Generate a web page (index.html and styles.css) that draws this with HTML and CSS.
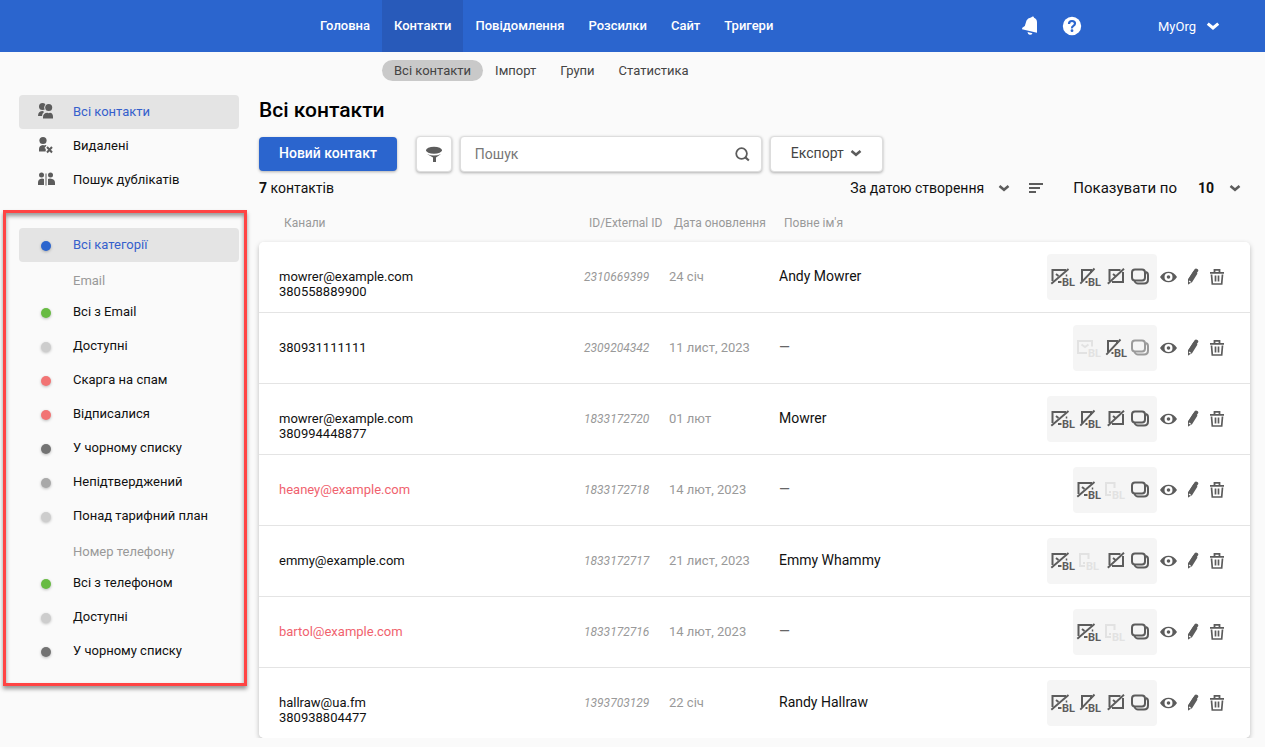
FILE: index.html
```html
<!DOCTYPE html>
<html lang="uk">
<head>
    <meta charset="UTF-8">
    <meta name="viewport" content="width=device-width, initial-scale=1.0">
    <title>Всі контакти</title>
    <link rel="stylesheet" href="styles.css">
</head>
<body>
    <!-- shared icons -->
    <svg class="sprite" aria-hidden="true">
        <symbol id="chevron" viewBox="0 0 12 12">
            <path d="M1.500 4l4.500 3.700L10.500 4" fill="none" stroke="currentColor" stroke-width="2.600"/>
        </symbol>
        <symbol id="mail-off-bl" viewBox="0 0 26 24">
            <path d="M16 5H2.500v11M8 17h3.500M6 9l2.500 2" fill="none" stroke="currentColor" stroke-width="2"/>
            <path d="M16.500 9.500v2" fill="none" stroke="currentColor" stroke-width="1.500"/>
            <path d="M1.300 18.700L18.500 4" fill="none" stroke="currentColor" stroke-width="1.900"/>
            <text x="12" y="21">BL</text>
        </symbol>
        <symbol id="mail-bl" viewBox="0 0 26 24">
            <path d="M16 10.500V5H2v12h9M5.500 8.500L9 11l3.500-2.500" fill="none" stroke="currentColor" stroke-width="2"/>
            <text x="12" y="21">BL</text>
        </symbol>
        <symbol id="phone-off-bl" viewBox="0 0 26 24">
            <path d="M15 8V5H6v11M9.500 17h2" fill="none" stroke="currentColor" stroke-width="2"/>
            <path d="M4.300 18.700L18.500 3.500" fill="none" stroke="currentColor" stroke-width="1.900"/>
            <text x="12" y="21">BL</text>
        </symbol>
        <symbol id="phone-bl" viewBox="0 0 26 24">
            <path d="M12.500 10V5H4v12h5M7 14h2" fill="none" stroke="currentColor" stroke-width="2"/>
            <text x="10" y="21">BL</text>
        </symbol>
        <symbol id="mail-off" viewBox="0 0 26 24">
            <path d="M18.500 5H7.500v11M21 7v10H10M11 9l2.500 2" fill="none" stroke="currentColor" stroke-width="2"/>
            <path d="M5.800 18.700L22 3.800" fill="none" stroke="currentColor" stroke-width="1.900"/>
        </symbol>
        <symbol id="stack" viewBox="0 0 26 24">
            <rect x="4" y="4.500" width="13" height="11" rx="3" fill="none" stroke="currentColor" stroke-width="2"/>
            <path d="M17.500 7q2.500.5 2.500 3v4.500q0 4-4 4h-6q-2.500 0-3.500-2.500" fill="none" stroke="currentColor" stroke-width="2"/>
        </symbol>
        <symbol id="eye" viewBox="0 0 24 24">
            <path fill-rule="evenodd" d="M3 12C5 8.500 8.300 6.700 11.500 6.700S18 8.500 20 12c-2 3.500-5.300 5.300-8.500 5.300S5 15.500 3 12zM11.500 8a4 4 0 1 0 0 8 4 4 0 0 0 0-8zM11.500 10.200a1.800 1.800 0 1 1 0 3.600 1.800 1.800 0 0 1 0-3.600z" fill="currentColor"/>
        </symbol>
        <symbol id="pencil" viewBox="0 0 24 24">
            <path d="M12.800 5.500l1-1.500q1-1 2-.300l1 .6q1 .8.300 2L8.300 18.300 7 19.500V14.500z" fill="currentColor"/>
            <path d="M7 19.500V14.500L12.500 6l4 2.500L11 17.300z" fill="currentColor"/>
            <path d="M8 16l1.700 1.200" stroke="#fff" stroke-width="1.100"/>
        </symbol>
        <symbol id="trash" viewBox="0 0 24 24">
            <path d="M5 7.800h14M9.500 7.500V4.800h5v2.700" fill="none" stroke="currentColor" stroke-width="1.800"/>
            <path d="M6.500 9.500l.8 9.500h9.400l.8-9.500M10.500 10.500v6M13.500 10.500v6" fill="none" stroke="currentColor" stroke-width="1.700"/>
        </symbol>
    </svg>

    <header class="header">
        <nav class="nav">
            <a href="#">Головна</a>
            <a href="#" class="active">Контакти</a>
            <a href="#">Повідомлення</a>
            <a href="#">Розсилки</a>
            <a href="#">Сайт</a>
            <a href="#">Тригери</a>
        </nav>
        <div class="header-tools">
            <button type="button" class="icon-button" aria-label="Сповіщення">
                <svg width="20" height="20" viewBox="0 0 20 20"><path d="M12.500.5q1.500-.3 1.500 1.200 3 1 3 4.500V16.700L2 13.300l.3-1.600 2.500-1.800 1.700-5.400Q7.700 1.800 11 1.500zM7.500 16l5 1.200q-.9 2-2.800 1.600T7.500 16z" fill="#fff"/></svg>
            </button>
            <button type="button" class="icon-button" aria-label="Довідка">
                <svg width="20" height="20" viewBox="0 0 20 20"><circle cx="10" cy="10" r="9.200" fill="#fff"/><path d="M7 8q0-3 3-3t3 2.600q0 1.400-1.600 2.300T10 12.300" fill="none" stroke="#2b65ce" stroke-width="2.200"/><circle cx="10" cy="14.700" r="1.400" fill="#2b65ce"/></svg>
            </button>
            <button type="button" class="account">MyOrg <svg width="14" height="14"><use href="#chevron"/></svg></button>
        </div>
    </header>

    <nav class="subnav">
        <a href="#" class="active">Всі контакти</a>
        <a href="#">Імпорт</a>
        <a href="#">Групи</a>
        <a href="#">Статистика</a>
    </nav>

    <div class="layout">
        <aside class="sidebar">
            <nav class="menu">
                <a href="#" class="active">
                    <svg width="18" height="18" viewBox="0 0 18 18" fill="currentColor"><circle cx="5.500" cy="4.500" r="3.500"/><path d="M1 14q0-5 5-5l1 1q-2 1.500-2 4z"/><circle cx="11.500" cy="5.500" r="4.300" fill="#e4e4e4"/><circle cx="11.700" cy="5.600" r="3.500"/><path d="M6 16.500v-1.500q0-4 4.500-4.200 1.200.8 2.500 0 3 .2 3 4.200v1.500z"/></svg>
                    Всі контакти
                </a>
                <a href="#">
                    <svg width="18" height="18" viewBox="0 0 18 18" fill="currentColor"><circle cx="6" cy="4.500" r="3.600"/><path d="M2 15.500V13q0-3.500 4-4 1 .8 2.500 0l1 .5L7.500 12q2 .5 1 3.500z"/><path d="M10 11l5 5.500M15 11l-5 5.500" stroke="currentColor" stroke-width="2"/></svg>
                    Видалені
                </a>
                <a href="#">
                    <svg width="18" height="18" viewBox="0 0 18 18" fill="currentColor"><circle cx="4.500" cy="5" r="2.500"/><path d="M1 15v-2.500Q1 9 5 8.500l2 .5v6zM8.500 3.500h1v12h-1z"/><circle cx="13.500" cy="5" r="2.500"/><path d="M11 15V9l2-.5q5 .5 5 4V15z"/></svg>
                    Пошук дублікатів
                </a>
            </nav>

            <nav class="menu categories">
                <a href="#" class="active"><span class="dot blue"></span>Всі категорії</a>
                <h2>Email</h2>
                <a href="#"><span class="dot green"></span>Всі з Email</a>
                <a href="#"><span class="dot light"></span>Доступні</a>
                <a href="#"><span class="dot red"></span>Скарга на спам</a>
                <a href="#"><span class="dot red"></span>Відписалися</a>
                <a href="#"><span class="dot dark"></span>У чорному списку</a>
                <a href="#"><span class="dot gray"></span>Непідтверджений</a>
                <a href="#"><span class="dot light"></span>Понад тарифний план</a>
                <h2>Номер телефону</h2>
                <a href="#"><span class="dot green"></span>Всі з телефоном</a>
                <a href="#"><span class="dot light"></span>Доступні</a>
                <a href="#"><span class="dot dark"></span>У чорному списку</a>
            </nav>
        </aside>

        <main class="main">
            <h1>Всі контакти</h1>
            <div class="toolbar">
                <button type="button" class="button primary">Новий контакт</button>
                <button type="button" class="button filter" aria-label="Фільтр">
                    <svg width="18" height="18" viewBox="0 0 18 18" fill="currentColor"><ellipse cx="9" cy="5.200" rx="8" ry="3.500"/><path d="M2 9q7 3 14 0l-5 3.500V17H8v-4.500z"/></svg>
                </button>
                <div class="search">
                    <input type="search" placeholder="Пошук" aria-label="Пошук">
                    <svg width="15" height="15" viewBox="0 0 16 16"><circle cx="7" cy="7" r="5.700" fill="none" stroke="currentColor" stroke-width="1.900"/><path d="M10.800 10.800l4 3.700" stroke="currentColor" stroke-width="2.200"/></svg>
                </div>
                <button type="button" class="button export">Експорт <svg width="12" height="12"><use href="#chevron"/></svg></button>
            </div>

            <div class="status">
                <p><b>7</b> контактів</p>
                <div class="select sort">
                    <select aria-label="Сортування">
                        <option>За датою створення</option>
                    </select>
                    <svg width="12" height="12"><use href="#chevron"/></svg>
                </div>
                <button type="button" class="icon-button order" aria-label="Порядок сортування">
                    <svg width="14" height="12" viewBox="0 0 14 12"><path d="M0 2h14M0 6h11M0 10h7" stroke="currentColor" stroke-width="2"/></svg>
                </button>
                <label for="perPage">Показувати по</label>
                <div class="select per-page">
                    <select id="perPage">
                        <option>10</option>
                    </select>
                    <svg width="12" height="12"><use href="#chevron"/></svg>
                </div>
            </div>

            <table class="contacts">
                <thead>
                    <tr>
                        <th class="col-channels">Канали</th>
                        <th class="col-id">ID/External ID</th>
                        <th class="col-date">Дата оновлення</th>
                        <th class="col-name">Повне ім'я</th>
                        <th class="col-actions"></th>
                    </tr>
                </thead>
                <tbody>
                    <tr>
                        <td class="channels">mowrer@example.com<br>380558889900</td>
                        <td class="id">2310669399</td>
                        <td class="date">24 січ</td>
                        <td>Andy Mowrer</td>
                        <td class="actions"><div>
                            <span class="states"><svg><use href="#mail-off-bl"/></svg><svg><use href="#phone-off-bl"/></svg><svg><use href="#mail-off"/></svg><svg><use href="#stack"/></svg></span>
                            <button type="button" aria-label="Переглянути"><svg><use href="#eye"/></svg></button>
                            <button type="button" aria-label="Редагувати"><svg><use href="#pencil"/></svg></button>
                            <button type="button" aria-label="Видалити"><svg><use href="#trash"/></svg></button>
                        </div></td>
                    </tr>
                    <tr>
                        <td class="channels">380931111111</td>
                        <td class="id">2309204342</td>
                        <td class="date">11 лист, 2023</td>
                        <td class="empty">—</td>
                        <td class="actions"><div>
                            <span class="states"><svg class="off"><use href="#mail-bl"/></svg><svg><use href="#phone-off-bl"/></svg><svg class="muted"><use href="#stack"/></svg></span>
                            <button type="button" aria-label="Переглянути"><svg><use href="#eye"/></svg></button>
                            <button type="button" aria-label="Редагувати"><svg><use href="#pencil"/></svg></button>
                            <button type="button" aria-label="Видалити"><svg><use href="#trash"/></svg></button>
                        </div></td>
                    </tr>
                    <tr>
                        <td class="channels">mowrer@example.com<br>380994448877</td>
                        <td class="id">1833172720</td>
                        <td class="date">01 лют</td>
                        <td>Mowrer</td>
                        <td class="actions"><div>
                            <span class="states"><svg><use href="#mail-off-bl"/></svg><svg><use href="#phone-off-bl"/></svg><svg><use href="#mail-off"/></svg><svg><use href="#stack"/></svg></span>
                            <button type="button" aria-label="Переглянути"><svg><use href="#eye"/></svg></button>
                            <button type="button" aria-label="Редагувати"><svg><use href="#pencil"/></svg></button>
                            <button type="button" aria-label="Видалити"><svg><use href="#trash"/></svg></button>
                        </div></td>
                    </tr>
                    <tr>
                        <td class="channels blocked">heaney@example.com</td>
                        <td class="id">1833172718</td>
                        <td class="date">14 лют, 2023</td>
                        <td class="empty">—</td>
                        <td class="actions"><div>
                            <span class="states"><svg><use href="#mail-off-bl"/></svg><svg class="off"><use href="#phone-bl"/></svg><svg><use href="#stack"/></svg></span>
                            <button type="button" aria-label="Переглянути"><svg><use href="#eye"/></svg></button>
                            <button type="button" aria-label="Редагувати"><svg><use href="#pencil"/></svg></button>
                            <button type="button" aria-label="Видалити"><svg><use href="#trash"/></svg></button>
                        </div></td>
                    </tr>
                    <tr>
                        <td class="channels">emmy@example.com</td>
                        <td class="id">1833172717</td>
                        <td class="date">21 лист, 2023</td>
                        <td>Emmy Whammy</td>
                        <td class="actions"><div>
                            <span class="states"><svg><use href="#mail-off-bl"/></svg><svg class="off"><use href="#phone-bl"/></svg><svg><use href="#mail-off"/></svg><svg><use href="#stack"/></svg></span>
                            <button type="button" aria-label="Переглянути"><svg><use href="#eye"/></svg></button>
                            <button type="button" aria-label="Редагувати"><svg><use href="#pencil"/></svg></button>
                            <button type="button" aria-label="Видалити"><svg><use href="#trash"/></svg></button>
                        </div></td>
                    </tr>
                    <tr>
                        <td class="channels blocked">bartol@example.com</td>
                        <td class="id">1833172716</td>
                        <td class="date">14 лют, 2023</td>
                        <td class="empty">—</td>
                        <td class="actions"><div>
                            <span class="states"><svg><use href="#mail-off-bl"/></svg><svg class="off"><use href="#phone-bl"/></svg><svg><use href="#stack"/></svg></span>
                            <button type="button" aria-label="Переглянути"><svg><use href="#eye"/></svg></button>
                            <button type="button" aria-label="Редагувати"><svg><use href="#pencil"/></svg></button>
                            <button type="button" aria-label="Видалити"><svg><use href="#trash"/></svg></button>
                        </div></td>
                    </tr>
                    <tr>
                        <td class="channels">hallraw@ua.fm<br>380938804477</td>
                        <td class="id">1393703129</td>
                        <td class="date">22 січ</td>
                        <td>Randy Hallraw</td>
                        <td class="actions"><div>
                            <span class="states"><svg><use href="#mail-off-bl"/></svg><svg><use href="#phone-off-bl"/></svg><svg><use href="#mail-off"/></svg><svg><use href="#stack"/></svg></span>
                            <button type="button" aria-label="Переглянути"><svg><use href="#eye"/></svg></button>
                            <button type="button" aria-label="Редагувати"><svg><use href="#pencil"/></svg></button>
                            <button type="button" aria-label="Видалити"><svg><use href="#trash"/></svg></button>
                        </div></td>
                    </tr>
                </tbody>
            </table>
        </main>
    </div>
</body>
</html>
```

FILE: styles.css
```css
* {
    box-sizing: border-box;
}
body {
    margin: 0;
    font-family: Roboto, sans-serif;
    font-size: 14px;
    background-color: #fafafa;
    color: #111;
}
a {
    color: inherit;
    text-decoration: none;
}
button, input, select {
    font: inherit;
    color: inherit;
}
button {
    cursor: pointer;
}
svg {
    display: block;
    flex: none;
}
.sprite {
    display: none;
}

/* header */
.header {
    display: flex;
    height: 52px;
    padding-left: 308px;
    padding-right: 45px;
    background-color: #2b65ce;
    color: #fff;
    font-size: 13px;
}
.nav {
    display: flex;
    font-weight: 500;
}
.nav a {
    padding: 0 12px;
    line-height: 52px;
}
.nav a.active {
    background-color: #285aba;
}
.header-tools {
    display: flex;
    align-items: center;
    gap: 22px;
    margin-left: auto;
}
.icon-button {
    padding: 0;
    border: none;
    background: none;
}
.account {
    display: flex;
    align-items: center;
    gap: 10px;
    margin-left: 54px;
    padding: 0;
    border: none;
    background: none;
}
.subnav {
    display: flex;
    padding: 8px 0 14px 382px;
    font-size: 13px;
    color: #444;
}
.subnav a {
    padding: 0 12px;
    line-height: 21px;
    border-radius: 11px;
}
.subnav a.active {
    background-color: #c9c9c9;
}

/* sidebar */
.layout {
    display: flex;
    align-items: flex-start;
}
.sidebar {
    flex: none;
    width: 244px;
    margin: 0 12px 0 3px;
}
.menu {
    padding: 0 8px 0 16px;
    font-size: 13px;
}
.menu a {
    display: flex;
    align-items: center;
    height: 34px;
    padding: 0 0 2px 18px;
    gap: 18px;
    border-radius: 4px;
}
.menu a.active {
    background-color: #e4e4e4;
    color: #3460cc;
}
.menu svg {
    color: #5c5c5c;
}
.menu h2 {
    margin: 0;
    padding: 5px 0 0 54px;
    font-size: 13px;
    font-weight: 400;
    line-height: 28px;
    color: #999;
}
.categories {
    margin-top: 13px;
    padding: 15px 5px 15px 13px;
    border: 3px solid #ff4444;
    box-shadow: 0 3px 4px rgba(0, 0, 0, 0.4), inset 0 3px 4px rgba(0, 0, 0, 0.4);
}
.dot {
    width: 10px;
    height: 10px;
    margin: 3px 4px 0;
    border-radius: 50%;
    box-shadow: 0 1px 3px rgba(0, 0, 0, 0.25);
}
.blue {
    background-color: #2b65ce;
}
.green {
    background-color: #68bb43;
}
.light {
    background-color: #cdcdcd;
}
.red {
    background-color: #f27474;
}
.dark {
    background-color: #737373;
}
.gray {
    background-color: #a9a9a9;
}

/* main */
.main {
    flex: 1;
    min-width: 0;
    margin-right: 15px;
}
h1 {
    margin: 0 0 11px;
    font-size: 21px;
    font-weight: 500;
    line-height: 30px;
    color: #000;
}
.toolbar {
    display: flex;
    align-items: center;
    height: 36px;
    color: #5c5c5c;
}
.button {
    display: flex;
    align-items: center;
    justify-content: center;
    height: 36px;
    padding: 0 20px 2px;
    border: 1px solid #ddd;
    border-radius: 4px;
    background-color: #fff;
    box-shadow: 0 1px 3px rgba(0, 0, 0, 0.3);
}
.primary {
    height: 34px;
    margin-right: 19px;
    border: none;
    background-color: #2b65ce;
    color: #fff;
    font-weight: 500;
}
.filter {
    width: 36px;
    margin-right: 8px;
    padding: 0;
}
.search {
    display: flex;
    align-items: center;
    flex: 0 1 302px;
    height: 36px;
    margin-right: 8px;
    padding: 0 11px 0 14px;
    border: 1px solid #ddd;
    border-radius: 4px;
    background-color: #fff;
    box-shadow: 0 1px 3px rgba(0, 0, 0, 0.3);
}
.search input {
    flex: 1;
    min-width: 0;
    padding: 0;
    border: none;
    outline: none;
    background: none;
}
.search input::placeholder {
    color: #777;
}
.export {
    gap: 6px;
    color: #444;
}
.export svg {
    color: #5c5c5c;
}
.status {
    display: flex;
    align-items: center;
    height: 32px;
}
.status p {
    margin: 0 auto 0 0;
}
.status b, .per-page select {
    font-weight: 700;
}
.status label {
    font-size: 15px;
}
.status svg {
    color: #5c5c5c;
}
.select {
    display: grid;
    align-items: center;
}
.select select, .select svg {
    grid-area: 1 / 1;
}
.select select {
    padding: 0 26px 0 0;
    border: none;
    outline: none;
    background: none;
    appearance: none;
}
.select svg {
    justify-self: end;
    pointer-events: none;
}
.order {
    margin: 0 30px 0 19px;
}
.per-page {
    margin: 0 9px 0 21px;
}

/* contacts table */
.contacts {
    width: 100%;
    table-layout: fixed;
    border-collapse: separate;
    border-spacing: 0;
}
.contacts th {
    height: 38px;
    padding: 0 0 0 5px;
    font-size: 12px;
    font-weight: 400;
    text-align: left;
    white-space: nowrap;
    color: #999;
}
.contacts .col-channels {
    width: 325px;
    padding-left: 25px;
}
.col-id {
    width: 85px;
}
.col-date {
    width: 110px;
}
.col-actions {
    width: 220px;
}
.contacts tbody {
    border-radius: 5px;
    box-shadow: 0 2px 5px rgba(0, 0, 0, 0.25);
}
.contacts td {
    height: 71px;
    padding: 27px 0 0;
    line-height: 15px;
    vertical-align: top;
    background-color: #fff;
    border-bottom: 1px solid #e4e4e4;
}
.contacts tr:last-child td {
    height: 70px;
    border-bottom: none;
}
.contacts tbody tr:first-child td:first-child {
    border-top-left-radius: 5px;
}
.contacts tbody tr:first-child td:last-child {
    border-top-right-radius: 5px;
}
.contacts tbody tr:last-child td:first-child {
    border-bottom-left-radius: 5px;
}
.contacts tbody tr:last-child td:last-child {
    border-bottom-right-radius: 5px;
}
.contacts .channels {
    padding-left: 20px;
    font-size: 13px;
}
.contacts .blocked {
    color: #f0626e;
}
.contacts .id {
    padding-top: 28px;
    font-size: 12px;
    font-style: italic;
    color: #999;
}
.contacts .date {
    font-size: 13px;
    color: #999;
}
.contacts .empty {
    color: #666;
}
.contacts .actions {
    padding: 12px 21px 0 0;
    color: #5c5c5c;
}
.actions div {
    display: flex;
    align-items: center;
    justify-content: flex-end;
}
.states {
    display: flex;
    align-items: center;
    height: 46px;
    padding: 0 3px;
    border-radius: 4px;
    background-color: #f5f5f5;
}
.actions svg {
    width: 24px;
    height: 24px;
}
.states svg {
    width: 26px;
}
.actions button {
    padding: 0;
    border: none;
    background: none;
    color: inherit;
}
.actions .off {
    color: #e2e2e2;
}
.actions .muted {
    color: #9b9b9b;
}
symbol text {
    font-size: 11px;
    font-weight: 700;
    fill: currentColor;
}
```
